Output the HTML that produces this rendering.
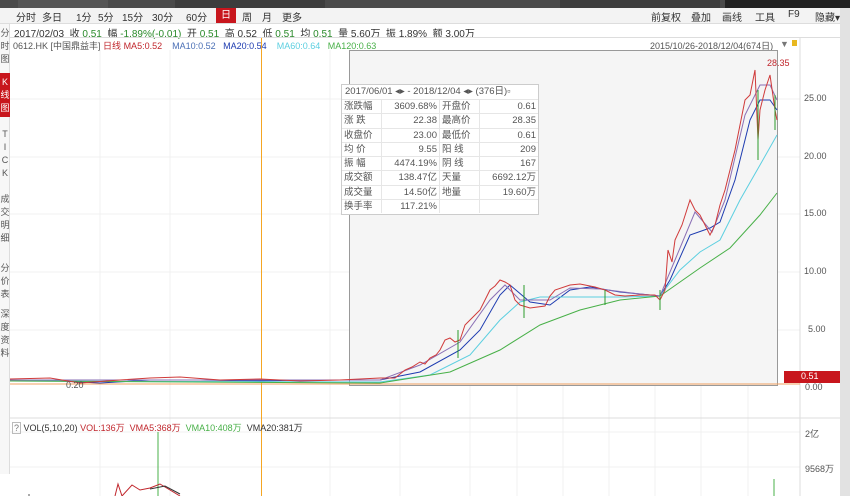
<!DOCTYPE html>
<html><head><meta charset="utf-8"><style>
*{margin:0;padding:0;box-sizing:border-box}
body{width:850px;height:496px;overflow:hidden;background:#fff;font-family:"Liberation Sans","Noto Sans CJK SC",sans-serif;font-size:10px;color:#333;position:relative}
.abs{position:absolute;white-space:nowrap}
#top{left:0;top:0;width:850px;height:8px;background:#4a4a4a}
#tb{left:0;top:8px;width:850px;height:16px;background:#f3f3f3;border-bottom:1px solid #ddd}
.b{position:absolute;top:9px;font-size:10px;color:#333}
#info{left:14px;top:25px;font-size:10px}
.g{color:#2a8a2a}.r{color:#c0262c}
#side{left:0;top:24px;width:10px;height:450px;background:#f7f7f7;border-right:1px solid #ddd}
.sv{position:absolute;left:0;width:10px;font-size:9px;line-height:13px;color:#555;text-align:center}
#tbl{left:341px;top:84px;width:198px;height:131px;background:#fff;border:1px solid #ccc;font-size:9.5px;overflow:hidden}
.row{display:flex;height:14.3px;line-height:14px;border-top:1px solid #e6e6e6}
.row div{border-right:1px solid #e6e6e6;padding:0 2px;color:#555}
.c1{width:40px}.c2{width:58px;text-align:right}.c3{width:40px}.c4{width:58px;text-align:right;border-right:none!important}
</style></head><body>
<div class="abs" id="top">
<div class="abs" style="left:18px;top:0;width:90px;height:8px;background:#555"></div>
<div class="abs" style="left:175px;top:0;width:150px;height:8px;background:#3d3d3d"></div>
<div class="abs" style="left:560px;top:0;width:160px;height:8px;background:#3d3d3d"></div>
<div class="abs" style="left:725px;top:0;width:125px;height:8px;background:#222"></div>
</div>
<div class="abs" id="tb"></div>
<span class="b" style="left:16px">分时</span>
<span class="b" style="left:42px">多日</span>
<span class="b" style="left:76px">1分</span>
<span class="b" style="left:98px">5分</span>
<span class="b" style="left:122px">15分</span>
<span class="b" style="left:152px">30分</span>
<span class="b" style="left:186px">60分</span>
<span class="abs" style="left:216px;top:8px;width:20px;height:15px;background:#c8161d;color:#fff;text-align:center;line-height:15px">日</span>
<span class="b" style="left:242px">周</span>
<span class="b" style="left:262px">月</span>
<span class="b" style="left:282px">更多</span>
<span class="b" style="left:651px">前复权</span>
<span class="b" style="left:691px">叠加</span>
<span class="b" style="left:722px">画线</span>
<span class="b" style="left:755px">工具</span>
<span class="b" style="left:788px">F9</span>
<span class="b" style="left:815px">隐藏▾</span>
<div class="abs" id="info">2017/02/03 &nbsp;收 <span class="g">0.51</span> &nbsp;幅 <span class="g">-1.89%(-0.01)</span> &nbsp;开 <span class="g">0.51</span> &nbsp;高 0.52 &nbsp;低 <span class="g">0.51</span> &nbsp;均 <span class="g">0.51</span> &nbsp;量 5.60万 &nbsp;振 1.89% &nbsp;额 3.00万</div>
<div class="abs" style="left:10px;top:37px;width:832px;height:1px;background:#ddd"></div>
<div class="abs" style="left:13px;top:39px;font-size:9px;color:#555">0612.HK [中国鼎益丰] <span class="r">日线</span> <span style="color:#c0262c">MA5:0.52</span> &nbsp;&nbsp;&nbsp;<span style="color:#4a6fb5">MA10:0.52</span> &nbsp;&nbsp;<span style="color:#1d3bb0">MA20:0.54</span> &nbsp;&nbsp;&nbsp;<span style="color:#5ccfe0">MA60:0.64</span> &nbsp;&nbsp;<span style="color:#48b048">MA120:0.63</span></div>
<div class="abs" style="left:650px;top:39px;font-size:9px;color:#555;text-decoration:underline">2015/10/26-2018/12/04(674日)</div>
<div class="abs" style="left:780px;top:39px;font-size:9px;color:#777">▼</div>
<div class="abs" style="left:792px;top:40px;width:5px;height:6px;background:#e8b820"></div>
<div class="abs" id="side">
<div class="sv" style="top:3px">分<br>时<br>图</div>
<div class="sv" style="top:49px;background:#c8161d;color:#fff;height:44px;padding-top:3px">K<br>线<br>图</div>
<div class="sv" style="top:104px">T<br>I<br>C<br>K</div>
<div class="sv" style="top:169px">成<br>交<br>明<br>细</div>
<div class="sv" style="top:238px">分<br>价<br>表</div>
<div class="sv" style="top:284px">深<br>度<br>资<br>料</div>
</div>
<div class="abs" style="left:840px;top:8px;width:10px;height:488px;background:#e2e2e2"></div>
<svg class="abs" style="left:0;top:0" width="850" height="496">
<g stroke="#f0f0f0" stroke-width="1">
<line x1="10" y1="99" x2="800" y2="99"/><line x1="10" y1="157" x2="800" y2="157"/><line x1="10" y1="214" x2="800" y2="214"/><line x1="10" y1="272" x2="800" y2="272"/><line x1="10" y1="330" x2="800" y2="330"/>
<line x1="10" y1="432" x2="800" y2="432"/><line x1="10" y1="467" x2="800" y2="467"/>
<line x1="470" y1="50" x2="470" y2="496"/><line x1="517" y1="50" x2="517" y2="496"/><line x1="563" y1="50" x2="563" y2="496"/><line x1="609" y1="50" x2="609" y2="496"/><line x1="655" y1="50" x2="655" y2="496"/><line x1="701" y1="50" x2="701" y2="496"/><line x1="748" y1="50" x2="748" y2="496"/>
<line x1="100" y1="50" x2="100" y2="496"/><line x1="170" y1="50" x2="170" y2="496"/><line x1="330" y1="50" x2="330" y2="496"/><line x1="400" y1="50" x2="400" y2="496"/>
</g>
<rect x="349.5" y="50.5" width="428" height="335" fill="#f5f5f5" stroke="#999"/>
<line x1="800" y1="38" x2="800" y2="496" stroke="#ddd"/>
<line x1="10" y1="418" x2="840" y2="418" stroke="#ddd"/>
<line x1="10" y1="384" x2="800" y2="384" stroke="#f0a060"/>
<line x1="261.5" y1="38" x2="261.5" y2="496" stroke="#f5a623"/>
<polyline fill="none" stroke="#1d3bb0" stroke-width="1" points="10,380 60,381 100,383 150,380 200,380 260,381 300,380 350,380 380,380 420,372 460,350 480,330 500,295 510,285 530,302 550,305 570,290 590,287 620,292 660,296 670,280 690,235 710,228 720,222 735,180 750,120 760,100 770,100 777,110"/>
<polyline fill="none" stroke="#5ccfe0" stroke-width="1" points="10,381 380,382 430,375 470,355 500,320 520,302 540,297 580,297 620,297 660,296 680,270 700,252 720,240 740,200 760,165 777,135"/>
<polyline fill="none" stroke="#48b048" stroke-width="1" points="10,381 380,383 450,372 500,350 540,325 580,310 620,300 660,296 700,268 730,248 760,215 777,193"/>
<polyline fill="none" stroke="#8a6fb5" stroke-width="1" points="10,380 380,380 420,365 460,342 490,300 505,285 520,300 550,300 570,288 600,289 640,294 660,296 675,260 695,212 712,232 725,200 745,115 760,85 770,85 777,100"/>
<polyline fill="none" stroke="#d03a3a" stroke-width="1" points="10,379 50,378 80,383 120,380 150,378 180,377 220,380 260,379 300,381 340,380 380,378 395,378 405,370 412,367 420,362 425,364 430,358 436,355 440,350 445,340 450,338 455,342 460,340 465,325 470,320 475,315 480,310 485,300 490,290 495,286 500,280 505,282 510,285 515,300 520,305 530,308 545,306 550,296 555,290 570,285 580,284 595,287 605,290 615,295 625,296 640,295 655,295 660,300 665,290 668,250 672,262 675,240 682,225 690,200 695,210 700,215 710,235 715,225 720,205 725,190 730,170 735,150 740,125 745,100 750,95 755,70 758,140 760,110 765,90 770,75 775,110 777,120"/>
<g stroke="#2a9a2a"><line x1="458" y1="330" x2="458" y2="358"/><line x1="524" y1="285" x2="524" y2="318"/><line x1="605" y1="290" x2="605" y2="305"/><line x1="660" y1="290" x2="660" y2="310"/><line x1="758" y1="90" x2="758" y2="160"/><line x1="775" y1="95" x2="775" y2="130"/></g>
<rect x="784" y="371" width="56" height="12" fill="#c8161d"/>
<line x1="158" y1="432" x2="158" y2="496" stroke="#48b048"/>
<line x1="774" y1="479" x2="774" y2="496" stroke="#48b048"/>
<polyline fill="none" stroke="#c0262c" points="115,496 118,484 122,496 132,485 140,490 150,488 160,484 170,490 180,496"/>
<polyline fill="none" stroke="#333" points="150,489 165,486 180,494"/>
<line x1="29" y1="494" x2="29" y2="496" stroke="#555"/>
</svg>
<div class="abs" style="left:767px;top:58px;font-size:9px;color:#c0262c">28.35</div>
<div class="abs" style="left:66px;top:380px;font-size:9px;color:#555">0.20</div>
<div class="abs" style="left:804px;top:93px;font-size:9px;color:#555">25.00</div>
<div class="abs" style="left:804px;top:151px;font-size:9px;color:#555">20.00</div>
<div class="abs" style="left:804px;top:208px;font-size:9px;color:#555">15.00</div>
<div class="abs" style="left:804px;top:266px;font-size:9px;color:#555">10.00</div>
<div class="abs" style="left:808px;top:324px;font-size:9px;color:#555">5.00</div>
<div class="abs" style="left:801px;top:371px;font-size:9px;color:#fff">0.51</div>
<div class="abs" style="left:805px;top:382px;font-size:9px;color:#555">0.00</div>
<div class="abs" style="left:805px;top:427px;font-size:9px;color:#555">2亿</div>
<div class="abs" style="left:805px;top:462px;font-size:9px;color:#555">9568万</div>
<div class="abs" style="left:12px;top:421px;font-size:9px;color:#333"><span style="border:1px solid #bbb;padding:0 1px;color:#777">?</span> VOL(5,10,20) <span class="r">VOL:136万</span> &nbsp;<span class="r">VMA5:368万</span> &nbsp;<span style="color:#48b048">VMA10:408万</span> &nbsp;VMA20:381万</div>
<div class="abs" id="tbl">
<div style="height:14px;line-height:14px;padding-left:3px;color:#555">2017/06/01 ◂▸ - 2018/12/04 ◂▸ (376日)▫</div>
<div class="row"><div class="c1">涨跌幅</div><div class="c2 r">3609.68%</div><div class="c3">开盘价</div><div class="c4 r">0.61</div></div>
<div class="row"><div class="c1">涨 跌</div><div class="c2 r">22.38</div><div class="c3">最高价</div><div class="c4 r">28.35</div></div>
<div class="row"><div class="c1">收盘价</div><div class="c2 r">23.00</div><div class="c3">最低价</div><div class="c4 r">0.61</div></div>
<div class="row"><div class="c1">均 价</div><div class="c2 r">9.55</div><div class="c3">阳 线</div><div class="c4 r">209</div></div>
<div class="row"><div class="c1">振 幅</div><div class="c2 r">4474.19%</div><div class="c3">阴 线</div><div class="c4 g">167</div></div>
<div class="row"><div class="c1">成交额</div><div class="c2">138.47亿</div><div class="c3">天量</div><div class="c4">6692.12万</div></div>
<div class="row"><div class="c1">成交量</div><div class="c2">14.50亿</div><div class="c3">地量</div><div class="c4">19.60万</div></div>
<div class="row"><div class="c1">换手率</div><div class="c2">117.21%</div><div class="c3"></div><div class="c4"></div></div>
</div>
</body></html>
